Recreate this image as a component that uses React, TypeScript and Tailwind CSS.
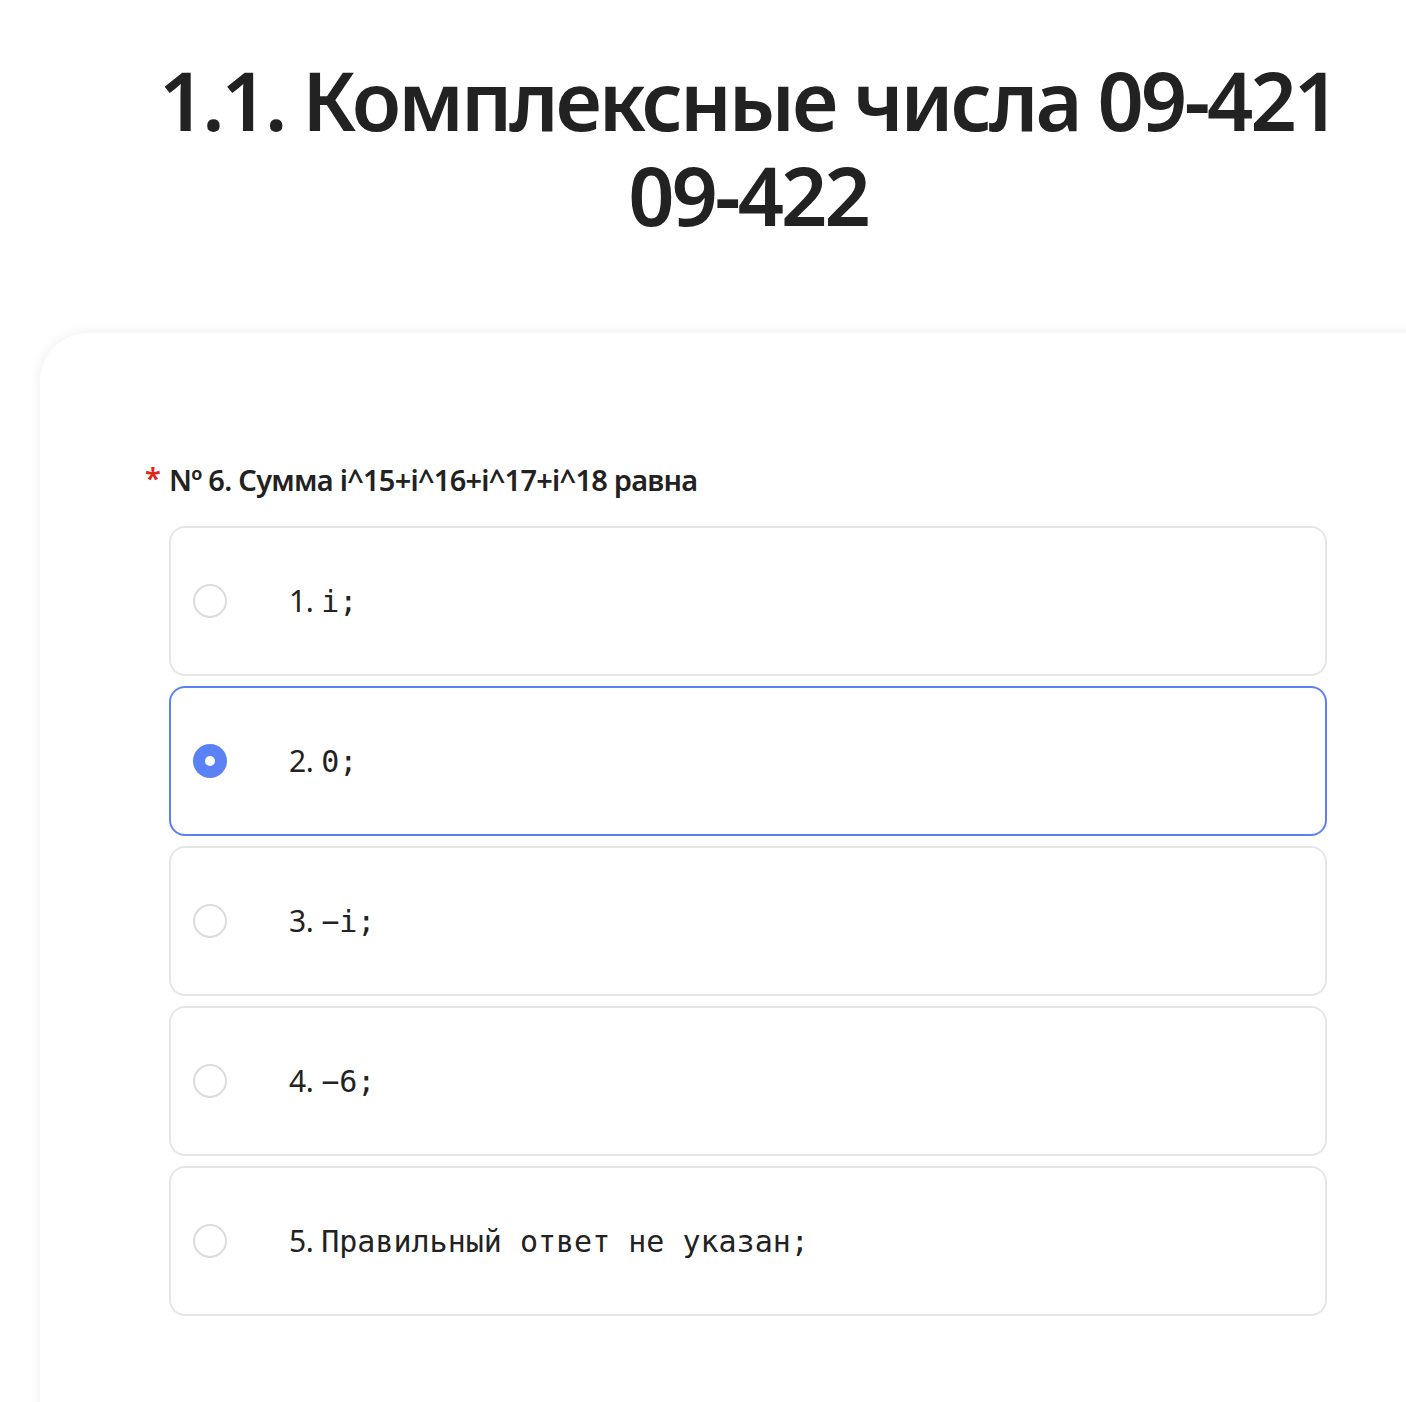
import React from "react";

const options = [
  { n: "1.", t: "i;" },
  { n: "2.", t: "0;" },
  { n: "3.", t: "−i;" },
  { n: "4.", t: "−6;" },
  { n: "5.", t: "Правильный ответ не указан;" },
];

function Radio({ checked }: { checked: boolean }) {
  return checked ? (
    <div className="w-[34px] h-[34px] rounded-full bg-[#5b82f5] flex items-center justify-center shrink-0">
      <div className="w-[10px] h-[10px] rounded-full bg-white" />
    </div>
  ) : (
    <div className="w-[34px] h-[34px] rounded-full border-2 border-[#dcdcdc] bg-white shrink-0" />
  );
}

export default function App() {
  return (
    <div className="w-full min-h-[1402px] overflow-hidden bg-white text-[#222222] font-['Noto_Sans',sans-serif]">
      <div className="ml-[40px] w-[1416px]">
        <h1 className="pt-[52px] text-center text-[81px] leading-[95px] font-semibold tracking-[-3px] px-[80px]">
          1.1. Комплексные числа 09-421 09-422
        </h1>
        <div className="mt-[91px] rounded-[48px] bg-white shadow-[0_0_14px_rgba(0,0,0,0.07)] px-[129px] pt-[129px] pb-[200px]">
          <div className="relative text-[29px] leading-[36px] font-semibold tracking-[-0.75px]">
            <span className="absolute left-[-24px] top-[-2px] text-[#e0261b]">*</span>
            Nº 6. Сумма i^15+i^16+i^17+i^18 равна
          </div>
          <div className="mt-[28px] flex flex-col gap-[10px]">
            {options.map((o, i) => (
              <div
                key={i}
                className={
                  "h-[150px] rounded-[16px] border-2 flex items-center pl-[22px] " +
                  (i === 1 ? "border-[#5b82f5]" : "border-[#e6e6e6]")
                }
              >
                <Radio checked={i === 1} />
                <div className="ml-[62px] flex items-baseline">
                  <span className="text-[30px] font-['Noto_Sans',sans-serif] mr-[8px] tracking-[-0.5px]">{o.n}</span>
                  <span className="text-[30px] font-['DejaVu_Sans_Mono',monospace] whitespace-pre">{o.t}</span>
                </div>
              </div>
            ))}
          </div>
        </div>
      </div>
    </div>
  );
}
